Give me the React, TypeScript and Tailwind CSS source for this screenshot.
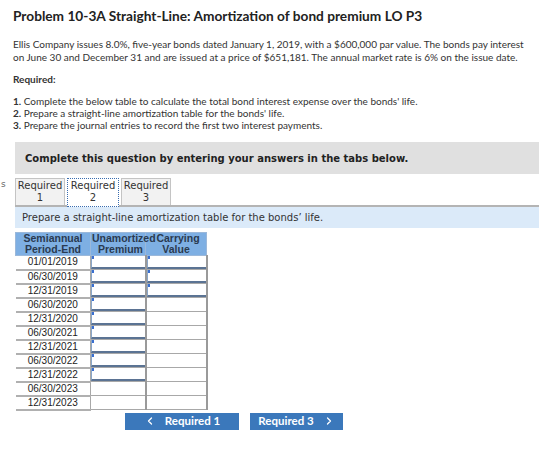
import { ChevronLeft, ChevronRight } from 'lucide-react';

const periods = [
  '01/01/2019',
  '06/30/2019',
  '12/31/2019',
  '06/30/2020',
  '12/31/2020',
  '06/30/2021',
  '12/31/2021',
  '06/30/2022',
  '12/31/2022',
  '06/30/2023',
  '12/31/2023',
];

// how many rows of each column take an answer
const premiumInputs = 9;
const carryingInputs = 3;

function InputCell({ active }: { active: boolean }) {
  if (!active) {
    return <td className="h-[14px] border border-[#a8a8a8] border-r-2 border-r-[#9a9a9a] bg-white p-0" />;
  }
  return (
    <td className="h-[14px] border border-[#a8a8a8] border-r-2 border-r-[#9a9a9a] bg-white p-0">
      <div className="relative h-[13px] border-b-2 border-b-[#5b7393] border-l border-l-[#8aa6c8]">
        <span className="absolute left-0 top-0 h-[3px] w-[2px] bg-[#3a6fd0]" />
      </div>
    </td>
  );
}

function Tab({ label, n, selected }: { label: string; n: number; selected?: boolean }) {
  return (
    <div
      className={
        selected
          ? 'relative -mb-[2px] flex h-[29px] w-[52px] flex-col items-center border border-dotted border-[#3a6db0] bg-white pt-[1px] text-[10px] leading-[12px]'
          : 'flex h-[27px] w-[50px] flex-col items-center border border-[#c4c4c4] border-b-0 bg-[#f2f2f2] pt-[1px] text-[10px] leading-[12px]'
      }
    >
      <span>{label}</span>
      <span>{n}</span>
    </div>
  );
}

export default function App() {
  return (
    <div className="relative h-[466px] w-[560px] overflow-hidden bg-white text-[#333]">
      <div className="pl-[13px] pt-[8px] font-['Lato',sans-serif]">
        <h1 className="text-[13.7px] font-bold leading-[16px] text-[#222]">
          Problem 10-3A Straight-Line: Amortization of bond premium LO P3
        </h1>
        <p className="mt-[14px] text-[10px] leading-[13px]">
          Ellis Company issues 8.0%, five-year bonds dated January 1, 2019, with a $600,000 par value. The bonds pay interest
          <br />
          on June 30 and December 31 and are issued at a price of $651,181. The annual market rate is 6% on the issue date.
        </p>
        <p className="mt-[9px] text-[10px] font-bold leading-[13px]">Required:</p>
        <ol className="mt-[9px] text-[10px] leading-[12px]">
          <li>
            <b>1.</b> Complete the below table to calculate the total bond interest expense over the bonds' life.
          </li>
          <li>
            <b>2.</b> Prepare a straight-line amortization table for the bonds' life.
          </li>
          <li>
            <b>3.</b> Prepare the journal entries to record the first two interest payments.
          </li>
        </ol>
      </div>

      <div className="ml-[15px] mt-[11px] w-[524px] font-['DejaVu_Sans',sans-serif]">
        <div className="flex h-[32px] items-center bg-[#e0e0e0] pl-[10px] text-[10px] font-bold text-[#222]">
          Complete this question by entering your answers in the tabs below.
        </div>

        <div className="relative mt-[4px] flex items-end gap-[2px] text-[#333]">
          <span className="absolute -left-[14px] top-[0px] text-[9px] text-[#666]">s</span>
          <Tab label="Required" n={1} />
          <Tab label="Required" n={2} selected />
          <Tab label="Required" n={3} />
        </div>
        <div className="flex h-[23px] items-center border-t-2 border-[#b4b4b4] bg-[#dbeaf9] pl-[7px] text-[10px] text-[#333]">
          Prepare a straight-line amortization table for the bonds’ life.
        </div>
      </div>

      <table className="ml-[15px] mt-[4px] w-[191px] table-fixed border-collapse font-['Liberation_Sans',sans-serif] text-[10px] leading-[10px]">
        <thead>
          <tr className="bg-[#7eafe3] text-[10.5px] leading-[11px] text-[#2a3a50]">
            <th className="h-[22px] w-[75px] whitespace-nowrap border border-[#9bb8da] p-0 font-bold">
              Semiannual
              <br />
              Period-End
            </th>
            <th className="w-[55px] overflow-visible whitespace-nowrap border border-[#9bb8da] p-0 pl-[1px] text-left font-bold">
              Unamortized
              <br />
              <span className="ml-[6px]">Premium</span>
            </th>
            <th className="w-[61px] whitespace-nowrap border border-[#9bb8da] p-0 text-center font-bold">
              <span className="ml-[4px]">Carrying</span>
              <br />
              Value
            </th>
          </tr>
        </thead>
        <tbody>
          {periods.map((p, i) => (
            <tr key={p}>
              <td className="h-[14px] border-b-2 border-b-[#b0b0b0] p-0 text-center text-[#222]">{p}</td>
              <InputCell active={i < premiumInputs} />
              <InputCell active={i < carryingInputs} />
            </tr>
          ))}
        </tbody>
      </table>

      <div className="ml-[125px] mt-[2px] flex gap-[11px] font-['Lato',sans-serif] text-[11.5px] font-bold text-white">
        <button className="flex h-[17px] w-[114px] items-center justify-center gap-[9px] bg-[#3b78bb]">
          <ChevronLeft className="h-[12px] w-[12px]" strokeWidth={2.5} />
          Required 1
        </button>
        <button className="flex h-[17px] w-[93px] items-center justify-center gap-[9px] bg-[#3b78bb]">
          Required 3
          <ChevronRight className="h-[12px] w-[12px]" strokeWidth={2.5} />
        </button>
      </div>
    </div>
  );
}
